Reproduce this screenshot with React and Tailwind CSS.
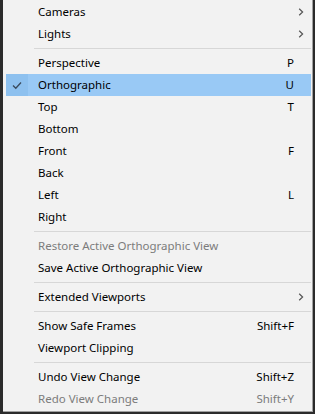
const items = [
  { label: 'Cameras', sub: true },
  { label: 'Lights', sub: true },
  { sep: true },
  { label: 'Perspective', key: 'P' },
  { label: 'Orthographic', key: 'U', checked: true, active: true },
  { label: 'Top', key: 'T' },
  { label: 'Bottom' },
  { label: 'Front', key: 'F' },
  { label: 'Back' },
  { label: 'Left', key: 'L' },
  { label: 'Right' },
  { sep: true },
  { label: 'Restore Active Orthographic View', disabled: true },
  { label: 'Save Active Orthographic View' },
  { sep: true },
  { label: 'Extended Viewports', sub: true },
  { sep: true },
  { label: 'Show Safe Frames', key: 'Shift+F' },
  { label: 'Viewport Clipping' },
  { sep: true },
  { label: 'Undo View Change', key: 'Shift+Z' },
  { label: 'Redo View Change', key: 'Shift+Y', disabled: true },
]

function Check() {
  return (
    <svg width="10" height="9" viewBox="0 0 10 9" fill="none">
      <path d="M1 4.5 L3.8 7.3 L9 1.5" stroke="#3a4a5c" strokeWidth="1.3" />
    </svg>
  )
}

function Chevron() {
  return (
    <svg width="6" height="8" viewBox="0 0 6 8" fill="none">
      <path d="M1.2 0.8 L4.6 4 L1.2 7.2" stroke="#555" strokeWidth="1.2" />
    </svg>
  )
}

export default function App() {
  return (
    <div
      className="h-[414px] w-[315px] overflow-hidden bg-[#2b2b2b] pl-[3px] text-[11.5px] text-black"
      style={{ fontFamily: '"Noto Sans", sans-serif' }}
    >
      <div className="w-[310px] border-r border-b border-[#a0a0a0] bg-[#f2f2f2] pr-[1px] pl-[3px] pt-[1px] pb-[1px]">
        {items.map((item, i) =>
          item.sep ? (
            <div key={i} className="flex h-[7px] items-center pl-[28px]">
              <div className="h-px w-full bg-[#d7d7d7]" />
            </div>
          ) : (
            <div
              key={i}
              className={`flex h-[22px] items-center ${item.active ? 'bg-[#99c9f5]' : ''} ${item.disabled ? 'text-[#7c7c7c]' : ''}`}
            >
              <div className={`flex h-full w-[22px] items-center justify-center ${item.active ? 'bg-[#8ec1ef]' : ''}`}>
                {item.checked ? <Check /> : null}
              </div>
              <span className="ml-[10px] flex-1 leading-none">{item.label}</span>
              {item.key ? (
                <span className="mr-[17px] leading-none">{item.key}</span>
              ) : null}
              {item.sub ? (
                <span className="mr-[7px] flex items-center">
                  <Chevron />
                </span>
              ) : null}
            </div>
          )
        )}
      </div>
    </div>
  )
}
